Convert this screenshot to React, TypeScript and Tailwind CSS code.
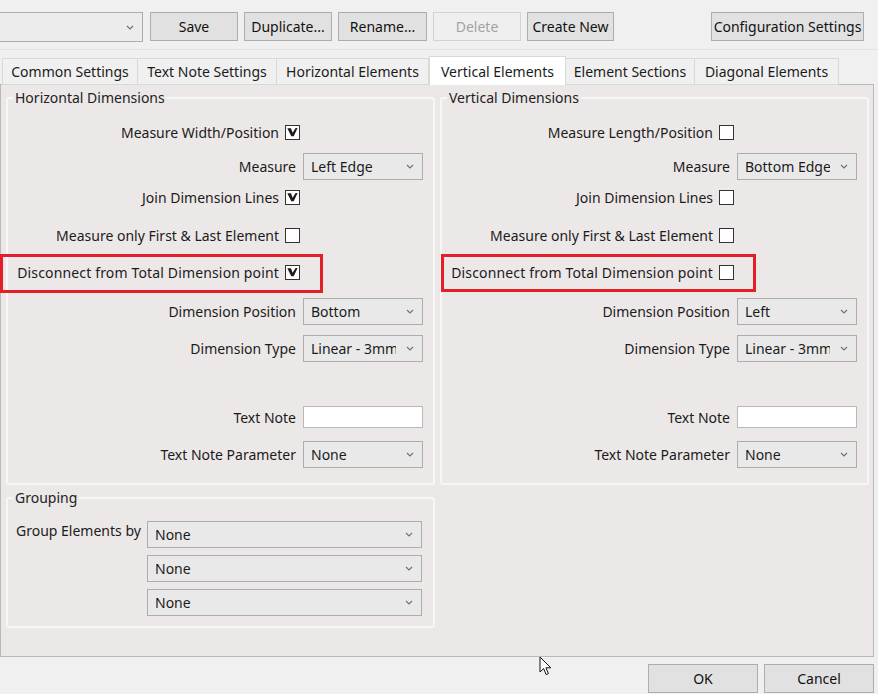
import React from "react";

function Chevron({ className = "ml-[6px]" }: { className?: string }) {
  return (
    <svg width="8" height="5" viewBox="0 0 8 5" className={`shrink-0 ${className}`}>
      <path d="M1 1l3 3 3-3" fill="none" stroke="#6f6f6f" strokeWidth="1.1" />
    </svg>
  );
}

function Select({ value, className = "" }: { value: string; className?: string }) {
  return (
    <div
      className={`flex h-[27px] items-center border border-[#adadad] bg-[#e9e9e9] pl-[7px] pr-[8px] ${className}`}
    >
      <span className="flex-1 overflow-hidden whitespace-nowrap">{value}</span>
      <Chevron className="ml-[10px]" />
    </div>
  );
}

function Check({ on }: { on?: boolean }) {
  return (
    <span className="flex h-[15px] w-[15px] shrink-0 items-center justify-center border border-[#333] bg-white">
      {on && (
        <svg width="11" height="10" viewBox="0 0 11 10">
          <polygon points="0.3,1.3 4,1.3 5.6,5.8 8.6,1 10.6,1 6.7,9.2 4.3,9.2" fill="#1c1c1c" />
        </svg>
      )}
    </span>
  );
}

function CheckRow({ label, on, className = "" }: { label: string; on?: boolean; className?: string }) {
  return (
    <div className={`flex h-[28px] items-center justify-end pr-[133px] ${className}`}>
      <span className="whitespace-nowrap">{label}</span>
      <span className="ml-[6px]">
        <Check on={on} />
      </span>
    </div>
  );
}

function SelectRow({ label, value, className = "" }: { label: string; value: string; className?: string }) {
  return (
    <div className={`flex h-[28px] items-center justify-end pr-[10px] ${className}`}>
      <span className="whitespace-nowrap">{label}</span>
      <Select value={value} className="ml-[7px] w-[120px]" />
    </div>
  );
}

function InputRow({ label, className = "" }: { label: string; className?: string }) {
  return (
    <div className={`flex h-[28px] items-center justify-end pr-[10px] ${className}`}>
      <span className="whitespace-nowrap">{label}</span>
      <div className="ml-[7px] h-[22px] w-[120px] border border-[#b9b9b9] bg-white" />
    </div>
  );
}

function Group({ title, children, className = "" }: { title: string; children: React.ReactNode; className?: string }) {
  return (
    <fieldset className={`rounded-[3px] border-2 border-[#f7f6f6] ${className}`}>
      <legend className="ml-[5px] px-[2px] leading-[20px] text-[#222]">{title}</legend>
      {children}
    </fieldset>
  );
}

function DimensionGroup({
  title,
  measureLabel,
  measure,
  position,
  checks,
}: {
  title: string;
  measureLabel: string;
  measure: string;
  position: string;
  checks: [boolean, boolean, boolean, boolean];
}) {
  return (
    <Group title={title} className="pb-[15px]">
      <CheckRow label={measureLabel} on={checks[0]} className="mt-[10px]" />
      <SelectRow label="Measure" value={measure} className="mt-[6px]" />
      <CheckRow label="Join Dimension Lines" on={checks[1]} className="mt-[3px]" />
      <CheckRow label="Measure only First & Last Element" on={checks[2]} className="mt-[10px]" />
      <CheckRow
        label="Disconnect from Total Dimension point"
        on={checks[3]}
        className="mt-[9px] tracking-[0.15px]"
      />
      <SelectRow label="Dimension Position" value={position} className="mt-[11px]" />
      <SelectRow label="Dimension Type" value="Linear - 3mm" className="mt-[9px]" />
      <InputRow label="Text Note" className="mt-[41px]" />
      <SelectRow label="Text Note Parameter" value="None" className="mt-[9px]" />
    </Group>
  );
}

function Btn({ label, className = "", disabled }: { label: string; className?: string; disabled?: boolean }) {
  return (
    <div
      className={`flex h-[29px] items-center justify-center whitespace-nowrap border ${
        disabled ? "border-[#d3d3d3] bg-[#efefef] text-[#a3a3a3]" : "border-[#adadad] bg-[#e1e1e1] text-[#111]"
      } ${className}`}
    >
      {label}
    </div>
  );
}

const tabs = [
  { label: "Common Settings", w: "w-[136px]" },
  { label: "Text Note Settings", w: "w-[140px]" },
  { label: "Horizontal Elements", w: "w-[153px]" },
  { label: "Vertical Elements", w: "w-[137px]", active: true },
  { label: "Element Sections", w: "w-[130px]" },
  { label: "Diagonal Elements", w: "w-[145px]" },
];

export default function App() {
  return (
    <div className="relative h-[694px] w-[878px] overflow-hidden bg-[#f0f0f0] font-['Noto_Sans',sans-serif] text-[14px] text-[#1b1b1b]">
      {/* toolbar */}
      <div className="flex items-start border-b border-[#e4e4e4] pt-[12px] pb-[7px]">
        <div className="ml-[-1px] flex h-[30px] w-[144px] items-center justify-end border border-[#acacac] bg-[#ececec] pr-[8px]">
          <Chevron />
        </div>
        <Btn label="Save" className="ml-[7px] w-[88px]" />
        <Btn label="Duplicate..." className="ml-[6px] w-[88px]" />
        <Btn label="Rename..." className="ml-[6px] w-[89px]" />
        <Btn label="Delete" disabled className="ml-[6px] w-[88px]" />
        <Btn label="Create New" className="ml-[6px] w-[87px]" />
        <Btn label="Configuration Settings" className="ml-auto mr-[14px] w-[153px]" />
      </div>

      {/* tabs */}
      <div className="relative z-10 mt-[6px] -mb-px flex h-[29px] items-end pl-[2px]">
        {tabs.map((t) =>
          t.active ? (
            <div
              key={t.label}
              className={`${t.w} flex h-[29px] items-center justify-center border border-b-0 border-[#d9d9d9] bg-white`}
            >
              {t.label}
            </div>
          ) : (
            <div
              key={t.label}
              className={`${t.w} -ml-px first:ml-0 flex h-[27px] items-center justify-center border border-[#d9d9d9] bg-[#f0f0f0]`}
            >
              {t.label}
            </div>
          )
        )}
      </div>

      {/* tab page */}
      <div className="h-[573px] w-[874px] border border-[#b9b9b9] bg-[#ece8e7] pl-[5px] pt-[3px]">
        <div className="grid grid-cols-[429px_429px] gap-x-[5px]">
          <div className="flex flex-col">
            <DimensionGroup
              title="Horizontal Dimensions"
              measureLabel="Measure Width/Position"
              measure="Left Edge"
              position="Bottom"
              checks={[true, true, false, true]}
            />
            <Group title="Grouping" className="mt-[3px] pb-[10px]">
              <div className="mt-[13px] flex items-start pl-[8px]">
                <span className="w-[131px] whitespace-nowrap leading-[20px]">Group Elements by</span>
                <div className="flex flex-col gap-[7px]">
                  <Select value="None" className="w-[275px]" />
                  <Select value="None" className="w-[275px]" />
                  <Select value="None" className="w-[275px]" />
                </div>
              </div>
            </Group>
          </div>
          <div>
            <DimensionGroup
              title="Vertical Dimensions"
              measureLabel="Measure Length/Position"
              measure="Bottom Edge"
              position="Left"
              checks={[false, false, false, false]}
            />
          </div>
        </div>
      </div>

      {/* dialog buttons */}
      <div className="flex justify-end gap-[6px] pr-[4px] pt-[7px]">
        <Btn label="OK" className="h-[28px] w-[110px]" />
        <Btn label="Cancel" className="h-[28px] w-[110px]" />
      </div>

      {/* annotation boxes */}
      <div className="absolute left-0 top-[254px] h-[39px] w-[323px] border-[3px] border-[#e3202a]" />
      <div className="absolute left-[441px] top-[254px] h-[38px] w-[315px] border-[3px] border-[#e3202a]" />

      {/* mouse pointer */}
      <svg className="absolute left-[539px] top-[656px]" width="13" height="20" viewBox="0 0 13 20">
        <path d="M1 1 L1 16 L4.6 12.6 L7.2 18.6 L9.4 17.6 L6.9 11.8 L11.8 11.8 Z" fill="#fff" stroke="#111" strokeWidth="1" strokeLinejoin="round" />
      </svg>
    </div>
  );
}
